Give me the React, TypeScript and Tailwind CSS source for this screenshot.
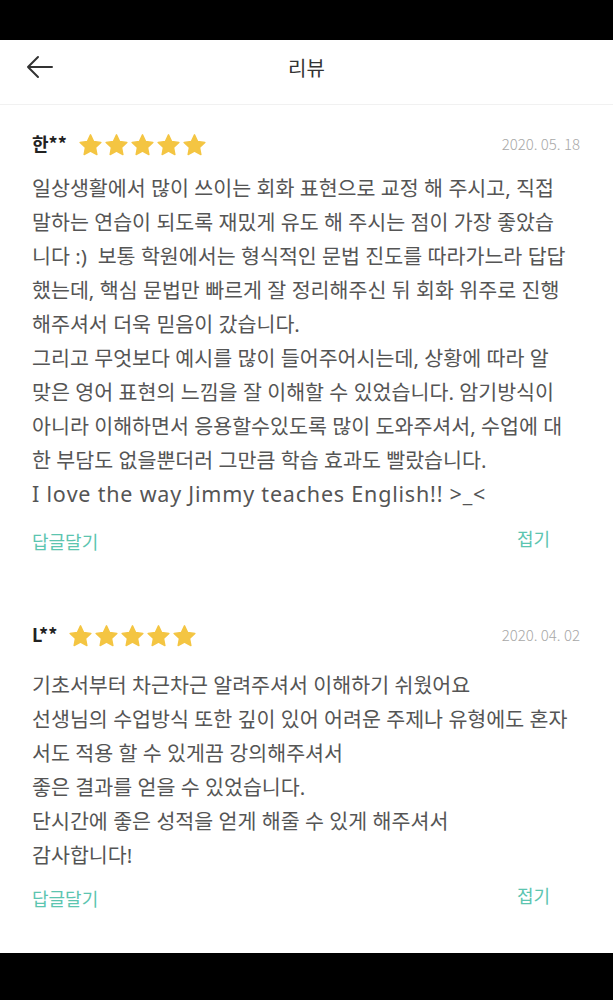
import React from 'react';

type Review = {
  name: string;
  date: string;
  bodyGap: string;
  actionGap: string;
  lines: string[];
};

const reviews: Review[] = [
  {
    name: '한**',
    date: '2020. 05. 18',
    bodyGap: 'mt-[16px]',
    actionGap: 'mt-[15px]',
    lines: [
      '일상생활에서 많이 쓰이는 회화 표현으로 교정 해 주시고, 직접',
      '말하는 연습이 되도록 재밌게 유도 해 주시는 점이 가장 좋았습',
      '니다 :)  보통 학원에서는 형식적인 문법 진도를 따라가느라 답답',
      '했는데, 핵심 문법만 빠르게 잘 정리해주신 뒤 회화 위주로 진행',
      '해주셔서 더욱 믿음이 갔습니다.',
      '그리고 무엇보다 예시를 많이 들어주어시는데, 상황에 따라 알',
      '맞은 영어 표현의 느낌을 잘 이해할 수 있었습니다. 암기방식이',
      '아니라 이해하면서 응용할수있도록 많이 도와주셔서, 수업에 대',
      '한 부담도 없을뿐더러 그만큼 학습 효과도 빨랐습니다.',
      'I love the way Jimmy teaches English!! >_<',
    ],
  },
  {
    name: 'L**',
    date: '2020. 04. 02',
    bodyGap: 'mt-[22px]',
    actionGap: 'mt-[11px]',
    lines: [
      '기초서부터 차근차근 알려주셔서 이해하기 쉬웠어요',
      '선생님의 수업방식 또한 깊이 있어 어려운 주제나 유형에도 혼자',
      '서도 적용 할 수 있게끔 강의해주셔서',
      '좋은 결과를 얻을 수 있었습니다.',
      '단시간에 좋은 성적을 얻게 해줄 수 있게 해주셔서',
      '감사합니다!',
    ],
  },
];

// latin-only lines render a bit wider in the original
const isLatin = (s: string) => /^[\x20-\x7e]+$/.test(s);

function Star() {
  return (
    <svg width="23" height="22" viewBox="1 1 22 21" className="shrink-0">
      <path
        d="M12 1.8l3 6.3 6.9.9-5.1 4.8 1.3 6.8L12 17.3l-6.1 3.3 1.3-6.8L2.1 9l6.9-.9z"
        fill="#f4c542"
        stroke="#f4c542"
        strokeWidth="1.4"
        strokeLinejoin="round"
      />
    </svg>
  );
}

function ReviewItem({ review }: { review: Review }) {
  return (
    <div className="px-[32px]">
      <div className="flex items-center h-[24px]">
        <span className="text-[18px] font-bold text-[#222] leading-none">{review.name}</span>
        <div className="flex items-center gap-[3px] ml-[12px] mt-[3px]">
          {[0, 1, 2, 3, 4].map((i) => (
            <Star key={i} />
          ))}
        </div>
        <span className="ml-auto mr-[1px] text-[15px] font-light text-[#a8a8a8] leading-none">
          {review.date}
        </span>
      </div>
      <div
        className={`${review.bodyGap} text-[20.6px] leading-[34px] text-[#555] [font-kerning:none] font-['Noto_Sans','Noto_Sans_CJK_KR',sans-serif]`}
      >
        {review.lines.map((line, i) => (
          <div
            key={i}
            className={isLatin(line) ? 'whitespace-pre text-[21.5px] tracking-[0.8px]' : 'whitespace-pre'}
          >
            {line}
          </div>
        ))}
      </div>
      <div className={`${review.actionGap} flex items-start justify-between pr-[31px]`}>
        <button className="text-[18px] text-[#5cc5b0] leading-[24px] mt-[3px]">답글달기</button>
        <button className="text-[18px] text-[#5cc5b0] leading-[24px]">접기</button>
      </div>
    </div>
  );
}

export default function App() {
  return (
    <div
      className="w-[613px] h-[1000px] flex flex-col bg-white overflow-hidden"
      style={{ fontFamily: '"Noto Sans CJK KR", "Noto Sans", sans-serif' }}
    >
      <div className="h-[40px] bg-black shrink-0" />
      <header className="relative h-[65px] shrink-0 flex items-center justify-center pb-[9px] border-b border-[#f1f1f1]">
        <button className="absolute left-[26px] top-[15px]">
          <svg width="28" height="24" viewBox="0 0 28 24" fill="none" stroke="#333" strokeWidth="2" strokeLinecap="round" strokeLinejoin="round">
            <path d="M26 12H2M12 2 2 12l10 10" />
          </svg>
        </button>
        <h1 className="text-[20px] text-[#333] font-normal">리뷰</h1>
      </header>
      <main className="flex-1 pt-[26px]">
        <ReviewItem review={reviews[0]} />
        <div className="h-[69px]" />
        <ReviewItem review={reviews[1]} />
      </main>
      <div className="h-[47px] bg-black shrink-0" />
    </div>
  );
}
